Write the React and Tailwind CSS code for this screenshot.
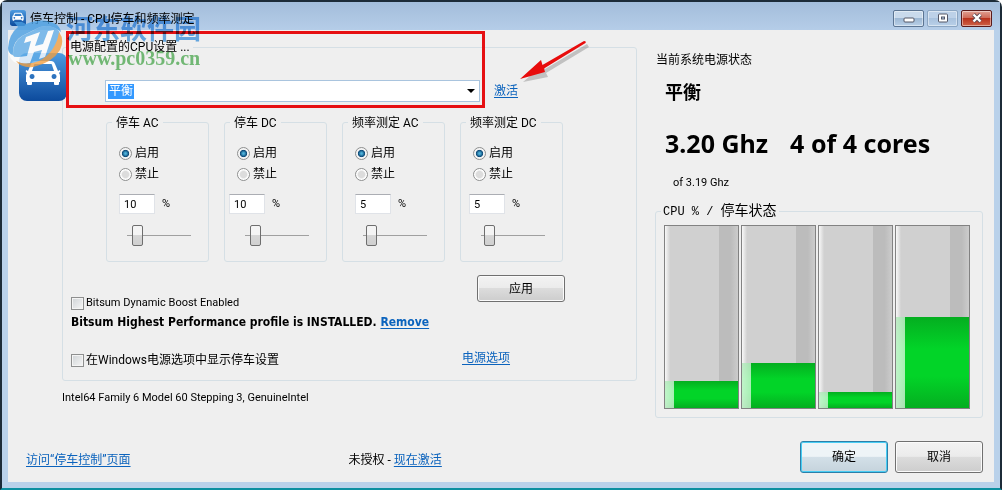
import React from "react";

const cores = [
  { id: 0, load: 15 },
  { id: 1, load: 25 },
  { id: 2, load: 9 },
  { id: 3, load: 50 },
];

const panels = [
  { id: "park-ac", title: "停车 AC", value: 10, level: 10, fieldClass: "pl-3" },
  { id: "park-dc", title: "停车 DC", value: 10, level: 10, fieldClass: "pl-1" },
  { id: "freq-ac", title: "频率测定 AC", value: 5, level: 5, fieldClass: "pl-3" },
  { id: "freq-dc", title: "频率测定 DC", value: 5, level: 5, fieldClass: "pl-2" },
];

const radioClass =
  "size-[13px] appearance-none rounded-full border border-[#8e8f8f] bg-[radial-gradient(circle,#dcdcdc_40%,#ffffff_60%)] checked:bg-[radial-gradient(circle,#4fb4dc_8%,#0d4a78_42%,#f4f4f4_52%)]";

const checkClass =
  "size-[13px] appearance-none border border-[#8e8f8f] bg-[linear-gradient(135deg,#cfd3d6,#f6f6f6)] shadow-[inset_0_0_0_1px_#f4f4f4] checked:bg-[#2b73b8]";

const linkClass = "text-[#0b63bd] underline underline-offset-2";

const boldClass = "font-['Noto_Sans','Noto_Sans_CJK_SC',sans-serif] font-bold";

const buttonClass =
  "rounded-[3px] border border-[#707070] bg-[linear-gradient(#f3f3f3_0%,#ebebeb_48%,#dcdcdc_50%,#cdcdcd_100%)] text-xs shadow-[inset_0_0_0_1px_#fbfbfb]";

function CarIcon({ className }) {
  return (
    <svg viewBox="0 0 48 48" className={className} aria-hidden="true">
      <defs>
        <linearGradient id="tile" x1="0" y1="0" x2="0" y2="1">
          <stop offset="0" stopColor="#4d9be0" />
          <stop offset="1" stopColor="#0c4a9c" />
        </linearGradient>
      </defs>
      <rect width="48" height="48" rx="8" fill="url(#tile)" />
      <path
        fill="#fff"
        fillRule="evenodd"
        d="M16 8h16q3 0 4 3l3 7 2-1q1 2-1 3 1 1 1 3v6h-1v2q0 1-1 1h-3q-1 0-1-1v-2H13v2q0 1-1 1H9q-1 0-1-1v-2H7v-6q0-2 1-3-2-1-1-3l2 1 3-7q1-3 4-3zm0 3q-1 0-1 1l-2 6h22l-2-6q0-1-1-1zM13 21a2.500 2.500 0 1 0 .1 0zM35 21a2.500 2.500 0 1 0 .1 0z"
      />
    </svg>
  );
}

function Watermark() {
  return (
    <>
      <svg
        viewBox="0 0 60 52"
        className="pointer-events-none absolute top-4 left-1 z-20 h-13 w-15 opacity-80"
        aria-hidden="true"
      >
        <path d="M2 30Q3 16 12 9L8 4h8l4 2Q36-1 50 6q4 3 5 8Q46 6 34 9L16 18Q6 24 7 37 2 36 2 30z" fill="#4a9fe2" />
        <path d="M7 37Q6 25 16 18L34 9q12-3 19 4 3 8-1 17-9 14-26 17Q11 47 7 37z" fill="#62aee8" />
        <path d="M2 32q3 8 11 7l8-1 4-15-7 2 2-6 14-5-5 14 8-2 5-13 6-1-9 27-6 2 3-9-8 2-4 11-6 1-7-1Q4 44 2 32z" fill="#fff" />
        <path d="M53 14q6 8 1 18-8 13-27 17-12 1-17-6 10 5 23 0Q50 34 53 14z" fill="#f19f42" />
      </svg>
      <div className="pointer-events-none absolute top-3 left-16 z-20 opacity-75 mix-blend-multiply">
        <div className="text-[27px] leading-8 font-bold text-[#3796e6]">河东软件园</div>
        <div className="pl-0.5 font-['Liberation_Serif','Noto_Sans_CJK_SC',serif] text-xl leading-6 font-bold text-[#4cb050]">
          www.pc0359.cn
        </div>
      </div>
    </>
  );
}

function TitleBar() {
  const control =
    "flex h-[17px] items-center justify-center rounded-[2px] border shadow-[inset_0_0_0_1px_rgba(255,255,255,0.45)]";
  return (
    <header className="flex h-7 items-center bg-[linear-gradient(#a3bddb,#b5cde8)] pr-2 pl-2">
      <CarIcon className="mt-1 size-4" />
      <h1 className="mt-1.5 ml-1 text-xs leading-5">停车控制 - CPU停车和频率测定</h1>
      <div className="ml-auto flex gap-[3px] pt-1">
        <button aria-label="最小化" className={`${control} w-[31px] border-[#5c7593] bg-[linear-gradient(#c9daec_48%,#9db8d4_50%,#b9d0e8)]`}>
          <svg viewBox="0 0 12 6" className="mt-1 h-1.5 w-3">
            <rect x="1" y="1" width="10" height="4" rx="1" fill="#fff" stroke="#535666" />
          </svg>
        </button>
        <button aria-label="最大化" className={`${control} w-[31px] border-[#8ba5c2] bg-[linear-gradient(#bdd1e8_48%,#a9c2de_50%,#b9d0e8)]`}>
          <svg viewBox="0 0 12 10" className="h-2.5 w-3">
            <rect x="1.5" y="1" width="9" height="8" rx="1" fill="#fff" stroke="#535666" />
            <rect x="4.5" y="4" width="3" height="2" fill="#b5cde8" stroke="#535666" />
          </svg>
        </button>
        <button aria-label="关闭" className={`${control} w-[31px] border-[#5a1a1a] bg-[linear-gradient(#e0a093_0%,#cf6a58_46%,#b8321d_50%,#cf6247_100%)]`}>
          <svg viewBox="0 0 12 10" className="h-2.5 w-3">
            <path d="M2.5 1.5l7 7M9.5 1.5l-7 7" stroke="#5b4a55" strokeWidth="4" />
            <path d="M2.5 1.5l7 7M9.5 1.5l-7 7" stroke="#fff" strokeWidth="2.4" />
          </svg>
        </button>
      </div>
    </header>
  );
}

function Panel({ id, title, value, level, fieldClass }) {
  return (
    <fieldset className="h-[149px] w-[103px] rounded-[3px] border border-[#d5dfe5]">
      <legend className="ml-[5px] px-1 pt-0.5 text-xs leading-4">{title}</legend>
      <div className="flex flex-col gap-[5px] pt-[14px] pl-3 text-xs leading-4">
        <label className="flex items-center gap-[3px]">
          <input type="radio" name={id} defaultChecked className={radioClass} />
          启用
        </label>
        <label className="flex items-center gap-[3px]">
          <input type="radio" name={id} className={radioClass} />
          禁止
        </label>
      </div>
      <div className={`flex items-start gap-[7px] pt-3 ${fieldClass}`}>
        <input
          type="text"
          id={`${id}-value`}
          aria-label={`${title} 百分比`}
          defaultValue={value}
          className="h-5 w-9 border border-[#e0e3e8] border-t-[#abadb3] bg-white px-1 text-[11px] leading-4"
        />
        <label htmlFor={`${id}-value`} className="text-[11px] leading-5">
          %
        </label>
      </div>
      <input
        type="range"
        aria-label={title}
        defaultValue={level}
        className="mt-2.5 ml-5 block h-[22px] w-16 appearance-none bg-[linear-gradient(#a0a0a0,#a0a0a0)] bg-[length:100%_1px] bg-center bg-no-repeat [&::-webkit-slider-thumb]:h-[21px] [&::-webkit-slider-thumb]:w-[11px] [&::-webkit-slider-thumb]:appearance-none [&::-webkit-slider-thumb]:rounded-[2px] [&::-webkit-slider-thumb]:border [&::-webkit-slider-thumb]:border-[#6e6e6e] [&::-webkit-slider-thumb]:bg-[linear-gradient(#f4f4f4_48%,#d6d6d6_50%,#d0d0d0)]"
      />
    </fieldset>
  );
}

function PowerSettings() {
  return (
    <fieldset className="relative min-w-0 rounded-[3px] border border-[#d5dfe5] pb-2.5">
      <legend className="ml-1 px-[3px] text-xs leading-4">电源配置的CPU设置 ...</legend>
      <div className="pointer-events-none absolute -top-6 left-[3px] z-10 h-[77px] w-[419px] border-3 border-[#e60f12]" />
      <svg viewBox="0 0 84 52" className="pointer-events-none absolute -top-3.5 right-[42px] h-13 w-[84px]" aria-hidden="true">
        <path d="M13 41L34 23l1 5L77 3l2 3L36 32l2 4z" fill="#555" opacity="0.3" />
        <path d="M10 38L31 19l1.500 5L74 0q2.500 0 1.500 2L34 27.500l1 3.500z" fill="#e80c0c" />
      </svg>

      <div className="flex items-center gap-[14px] pt-[25px] pl-[42px]">
        <div className="relative">
          <select
            aria-label="电源配置"
            className="block h-[22px] w-[375px] appearance-none border border-[#a9c4de] bg-white bg-[linear-gradient(#3399ff,#3399ff)] bg-[length:26px_15px] bg-[position:2px_3px] bg-no-repeat pl-[3px] text-xs text-white"
          >
            <option>平衡</option>
          </select>
          <svg viewBox="0 0 8 4" className="pointer-events-none absolute top-[9px] right-[5px] h-1 w-2" aria-hidden="true">
            <path d="M0 0h8L4 4z" fill="#000" />
          </svg>
        </div>
        <a href="#activate" className={`text-xs leading-4 ${linkClass}`}>
          激活
        </a>
      </div>

      <div className="flex w-[500px] justify-between pt-[11px] pl-[43px]">
        {panels.map((panel) => (
          <Panel key={panel.id} {...panel} />
        ))}
      </div>

      <div className="w-[502px] pt-[13px] pl-2">
        <div className="flex h-9 justify-between">
          <label className="flex items-center gap-0.5 self-end text-[11px] leading-4">
            <input type="checkbox" className={checkClass} />
            Bitsum Dynamic Boost Enabled
          </label>
          <button className={`h-[27px] w-22 ${buttonClass}`}>应用</button>
        </div>
        <p className="pt-px font-['DejaVu_Sans_Condensed','DejaVu_Sans',sans-serif] text-xs leading-5 font-bold">
          Bitsum Highest Performance profile is INSTALLED.{" "}
          <a href="#remove" className={linkClass}>
            Remove
          </a>
        </p>
      </div>

      <div className="flex items-start pt-[18px] pl-2 text-xs">
        <label className="flex w-[391px] items-center gap-0.5 leading-5">
          <input type="checkbox" className={checkClass} />
          在Windows电源选项中显示停车设置
        </label>
        <a href="#power-options" className={`leading-4 ${linkClass}`}>
          电源选项
        </a>
      </div>
    </fieldset>
  );
}

function CoreMeter({ load }) {
  return (
    <div
      role="meter"
      aria-label="CPU %"
      aria-valuenow={load}
      className="flex flex-col justify-end border border-[#828282] bg-[linear-gradient(90deg,#f8f8f8_0%,#d0d0d0_7%,#d0d0d0_74%,#bcbcbc_74%,#bcbcbc_90%,#cccccc_100%)]"
    >
      <div
        className="bg-[linear-gradient(90deg,rgba(255,255,255,0.75)_0%,rgba(255,255,255,0.65)_12%,transparent_12%),linear-gradient(#04ae20_0%,#02d428_35%,#02d428_65%,#04ae20_100%)]"
        style={{ height: `${load}%` }}
      />
    </div>
  );
}

function SystemStatus() {
  return (
    <section className="flex w-[328px] flex-col pt-[22px]">
      <h2 className="pl-px text-xs leading-4">当前系统电源状态</h2>
      <p className={`pt-2.5 pl-2.5 text-lg leading-7 ${boldClass}`}>平衡</p>
      <p className={`flex gap-[22px] pt-[17px] pl-2.5 text-[25px] leading-10 ${boldClass}`}>
        <span>3.20 Ghz</span>
        <span>4 of 4 cores</span>
      </p>
      <p className="pt-2.5 pl-[18px] text-[11px] leading-5">of 3.19 Ghz</p>
      <fieldset className="mt-2 rounded-[3px] border border-[#d5dfe5]">
        <legend className="ml-[5px] px-0.5 font-['Liberation_Mono','Noto_Sans_CJK_SC',monospace] text-xs leading-5">
          CPU % / <span className="text-sm leading-5">停车状态</span>
        </legend>
        <div className="mt-[3px] mr-3 mb-2 ml-2 grid h-46 grid-cols-4 gap-0.5">
          {cores.map((core) => (
            <CoreMeter key={core.id} load={core.load} />
          ))}
        </div>
      </fieldset>
    </section>
  );
}

export default function App() {
  return (
    <div className="relative flex min-h-screen flex-col rounded-t-[7px] border-2 border-[#1c2b38] border-b-[#0d8fa0] bg-[#b9d1ea] font-['Roboto','Noto_Sans_CJK_SC',sans-serif] text-black">
      <TitleBar />
      <Watermark />
      <main className="mx-1.5 mb-1.5 flex flex-1 flex-col bg-[#efefef] px-[11px]">
        <div className="flex">
          <CarIcon className="z-10 mt-[23px] -mr-[5px] size-12" />
          <div className="flex min-w-0 flex-1 flex-col pt-[9px]">
            <PowerSettings />
            <p className="pt-[9px] text-[11px] leading-4">Intel64 Family 6 Model 60 Stepping 3, GenuineIntel</p>
          </div>
          <div className="w-[18px]" />
          <SystemStatus />
        </div>
        <footer className="mt-auto flex items-center pb-[9px] pl-[7px] text-xs leading-4">
          <a href="#about" className={`pt-1.5 ${linkClass}`}>
            访问“停车控制”页面
          </a>
          <p className="ml-[218px] flex-1 pt-1.5">
            未授权 -{" "}
            <a href="#activate-now" className={linkClass}>
              现在激活
            </a>
          </p>
          <div className="flex gap-[7px]">
            <button className="h-8 w-22 rounded-[3px] border border-[#2c7fa8] bg-[linear-gradient(#eef4f7_48%,#d3e0e8_50%,#c5d3dc)] text-xs shadow-[inset_0_0_0_1px_#48cdf4]">
              确定
            </button>
            <button className={`h-8 w-22 ${buttonClass}`}>取消</button>
          </div>
        </footer>
      </main>
    </div>
  );
}
